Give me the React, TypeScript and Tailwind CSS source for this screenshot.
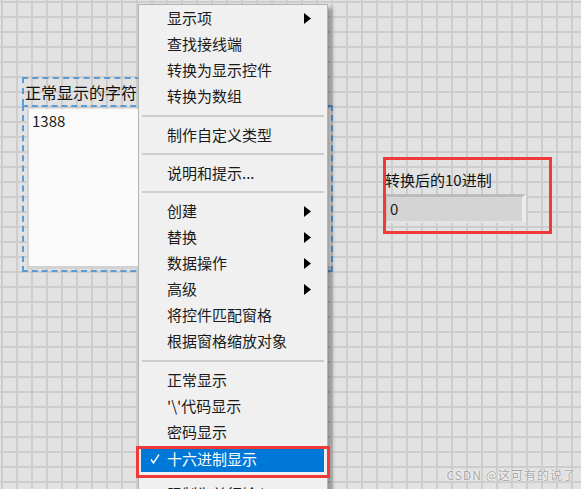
type Item = { label: string; sub?: boolean; checked?: boolean } | 'sep13' | 'sep12' | 'sep9'

const items: Item[] = [
  { label: '显示项', sub: true },
  { label: '查找接线端' },
  { label: '转换为显示控件' },
  { label: '转换为数组' },
  'sep13',
  { label: '制作自定义类型' },
  'sep12',
  { label: '说明和提示...' },
  'sep12',
  { label: '创建', sub: true },
  { label: '替换', sub: true },
  { label: '数据操作', sub: true },
  { label: '高级', sub: true },
  { label: '将控件匹配窗格' },
  { label: '根据窗格缩放对象' },
  'sep13',
  { label: '正常显示' },
  { label: "'\\'代码显示" },
  { label: '密码显示' },
  { label: '十六进制显示', checked: true },
  'sep9',
  { label: '限制为单行输入' },
  { label: '键入时刷新' },
]

const sepHeight = { sep13: 'h-[13px]', sep12: 'h-[12px]', sep9: 'h-[9px]' }

function Arrow() {
  return (
    <svg width="7" height="11" viewBox="0 0 7 11">
      <polygon points="0,0 7,5.5 0,11" fill="#000" />
    </svg>
  )
}

function Check() {
  return (
    <svg width="10" height="10" viewBox="0 0 10 10">
      <polyline points="1,5.5 3.5,9 9,0.5" fill="none" stroke="#fff" strokeWidth="1.4" />
    </svg>
  )
}

function ContextMenu() {
  return (
    <div className="absolute left-[138px] top-[4px] w-[190px] h-[520px] bg-[#f0f0f0] border border-[#b4b4b4] shadow-[4px_4px_4px_rgba(0,0,0,0.35)] flex flex-col">
      {items.map((it, i) => {
        if (typeof it === 'string') {
          return (
            <div key={i} className={`${sepHeight[it]} shrink-0 flex items-center px-[3px]`}>
              <div className="h-[2px] w-full bg-[#cdcdcd]" />
            </div>
          )
        }
        return (
          <div
            key={i}
            className={`h-[26px] shrink-0 flex items-center ml-[2px] mr-[3px] pr-[13px] text-[15px] ${
              it.checked ? 'bg-[#0078d7] text-white mt-px h-[25px]' : 'text-[#1a1a1a]'
            }`}
          >
            <div className="w-[26px] pl-[9px] flex items-center">{it.checked && <Check />}</div>
            <div className="flex-1 whitespace-nowrap">{it.label}</div>
            {it.sub && <Arrow />}
          </div>
        )
      })}
    </div>
  )
}

export default function App() {
  return (
    <div
      className="relative w-[581px] h-[489px] overflow-hidden bg-[#e2e2e2] bg-[linear-gradient(to_right,#cdcdcd_2px,transparent_2px),linear-gradient(to_bottom,#cdcdcd_2px,transparent_2px)] bg-[size:15px_15px] bg-[position:1px_1px]"
      style={{ fontFamily: '"Noto Sans CJK SC", "Noto Sans", sans-serif' }}
    >
      {/* string control, selected on the panel */}
      <div className="absolute left-[22px] top-[77px] flex flex-col">
        <div className="w-[160px] h-[28px] border-2 border-b-0 border-dashed border-[#5b9bd5] flex items-center pl-[1px] text-[16px] text-[#111] whitespace-nowrap overflow-hidden">
          正常显示的字符串
        </div>
        <div className="w-[311px] h-[167px] border-2 border-dashed border-[#5b9bd5] pl-[3px] pt-[2px] pb-[1px]">
          <div className="h-full bg-[#d2d2d2] pl-[2px] pb-[3px]">
            <div className="h-full bg-[#fafafa] px-[3px] pt-[2px] text-[15px] leading-[20px] text-[#1a1a1a]">1388</div>
          </div>
        </div>
      </div>

      {/* numeric indicator on the panel */}
      <div className="absolute left-[383px] top-[157px] w-[169px] h-[77px] border-[3px] border-[#f03a3a] pt-[9px]">
        <div className="-ml-[1px] text-[15px] leading-[22px] text-[#111] whitespace-nowrap">转换后的10进制</div>
        <div className="mt-[3px] w-[140px] h-[29px] bg-[#d4d4d4] border-t-[3px] border-t-[#bcbcbc] border-l border-l-[#c4c4c4] border-r-[4px] border-r-[#ececec] border-b-2 border-b-[#e4e4e4] flex items-center pl-[3px] text-[15px] text-[#1a1a1a]">
          0
        </div>
      </div>

      <ContextMenu />

      {/* red marker over the checked item */}
      <div className="absolute left-[136px] top-[446px] w-[194px] h-[32px] border-[3px] border-[#f03a3a]" />

      <div className="absolute right-[5px] bottom-[5px] text-[12px] tracking-[1px] text-[#a6a6a6] [text-shadow:0_0_2px_#fff,0_0_1px_#fff]">
        CSDN @这可有的说了
      </div>
    </div>
  )
}
